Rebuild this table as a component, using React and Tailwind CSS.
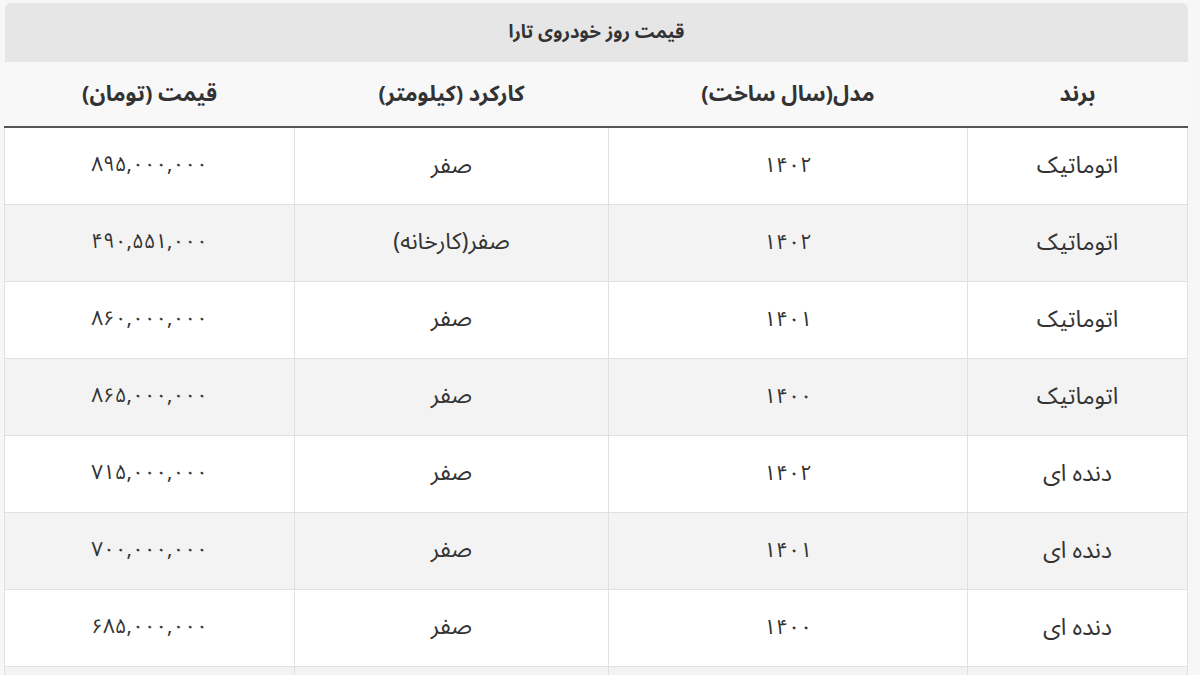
import React from 'react';

const rows = [
  ['اتوماتیک', '۱۴۰۲', 'صفر', '۸۹۵,۰۰۰,۰۰۰'],
  ['اتوماتیک', '۱۴۰۲', 'صفر(کارخانه)', '۴۹۰,۵۵۱,۰۰۰'],
  ['اتوماتیک', '۱۴۰۱', 'صفر', '۸۶۰,۰۰۰,۰۰۰'],
  ['اتوماتیک', '۱۴۰۰', 'صفر', '۸۶۵,۰۰۰,۰۰۰'],
  ['دنده ای', '۱۴۰۲', 'صفر', '۷۱۵,۰۰۰,۰۰۰'],
  ['دنده ای', '۱۴۰۱', 'صفر', '۷۰۰,۰۰۰,۰۰۰'],
  ['دنده ای', '۱۴۰۰', 'صفر', '۶۸۵,۰۰۰,۰۰۰'],
];

function App() {
  return (
    <div
      dir="rtl"
      className="min-h-screen h-[675px] overflow-hidden bg-[#f7f7f7] pt-[3px] px-[12px] pl-[5px] text-[#333]"
      style={{ fontFamily: '"Noto Sans Arabic", "DejaVu Sans", sans-serif' }}
    >
      <div className="w-[1183px]">
        <div className="h-[59px] rounded-t-md bg-[#e6e6e6] flex items-center justify-center text-[18.5px] font-bold">
          قیمت روز خودروی تارا
        </div>
        <table className="w-full table-fixed border-collapse">
          <colgroup>
            <col className="w-[220px]" />
            <col className="w-[359px]" />
            <col className="w-[314px]" />
            <col className="w-[290px]" />
          </colgroup>
          <thead>
            <tr className="h-[65px] bg-[#f8f8f8] border-b-2 border-[#555]">
              <th className="text-[22px] font-bold">برند</th>
              <th className="text-[22px] font-bold">مدل(سال ساخت)</th>
              <th className="text-[22px] font-bold">کارکرد (کیلومتر)</th>
              <th className="text-[22px] font-bold">قیمت (تومان)</th>
            </tr>
          </thead>
          <tbody>
            {rows.map((r, i) => (
              <tr key={i} className={i % 2 === 0 ? 'h-[77px] bg-white' : 'h-[77px] bg-[#f3f3f3]'}>
                <td className="border border-[#e0e0e0] text-center text-[23.5px]">{r[0]}</td>
                <td className="border border-[#e0e0e0] text-center text-[21px]">{r[1]}</td>
                <td className="border border-[#e0e0e0] text-center text-[23px]">{r[2]}</td>
                <td className="border border-[#e0e0e0] text-center text-[20.5px]">{r[3]}</td>
              </tr>
            ))}
            <tr className="h-[20px] bg-[#f3f3f3]">
              <td className="border border-[#e0e0e0]" />
              <td className="border border-[#e0e0e0]" />
              <td className="border border-[#e0e0e0]" />
              <td className="border border-[#e0e0e0]" />
            </tr>
          </tbody>
        </table>
      </div>
    </div>
  );
}

export default App;
